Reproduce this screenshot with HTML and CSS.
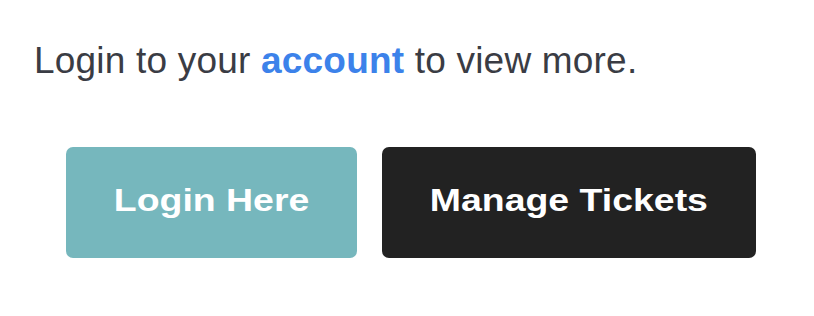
FILE: index.html
```html
<!DOCTYPE html>
<html>
<head>
<meta charset="utf-8">
<link rel="stylesheet" href="styles.css">
</head>
<body>
<div class="card">
  <p class="intro">Login to your <a class="link" href="#">account</a> to view more.</p>
  <div class="actions">
    <a class="btn btn-login" href="#"><span class="btn-label">Login Here</span></a>
    <a class="btn btn-manage" href="#"><span class="btn-label">Manage Tickets</span></a>
  </div>
</div>
</body>
</html>
```
FILE: styles.css
```css
html, body {
  margin: 0;
  padding: 0;
  background: #ffffff;
}
.card {
  padding: 39px 0 0 34px;
  font-family: "Liberation Sans", Arial, sans-serif;
}
.intro {
  margin: 0;
  font-size: 37px;
  line-height: 44px;
  letter-spacing: 0.2px;
  color: #3a3c44;
}
.link {
  color: #3c82ea;
  font-weight: bold;
  text-decoration: none;
}
.actions {
  display: flex;
  gap: 25px;
  margin: 64px 0 0 32px;
}
.btn {
  display: flex;
  align-items: center;
  justify-content: center;
  height: 111px;
  padding-bottom: 4px;
  border-radius: 7px;
  font-size: 32px;
  font-weight: bold;
  color: #ffffff;
  text-decoration: none;
  box-sizing: border-box;
}
.btn-label {
  display: inline-block;
  transform: scaleX(1.17);
}
.btn-login {
  width: 291px;
  background: #76b7bd;
}
.btn-manage {
  width: 374px;
  background: #222222;
}
```
